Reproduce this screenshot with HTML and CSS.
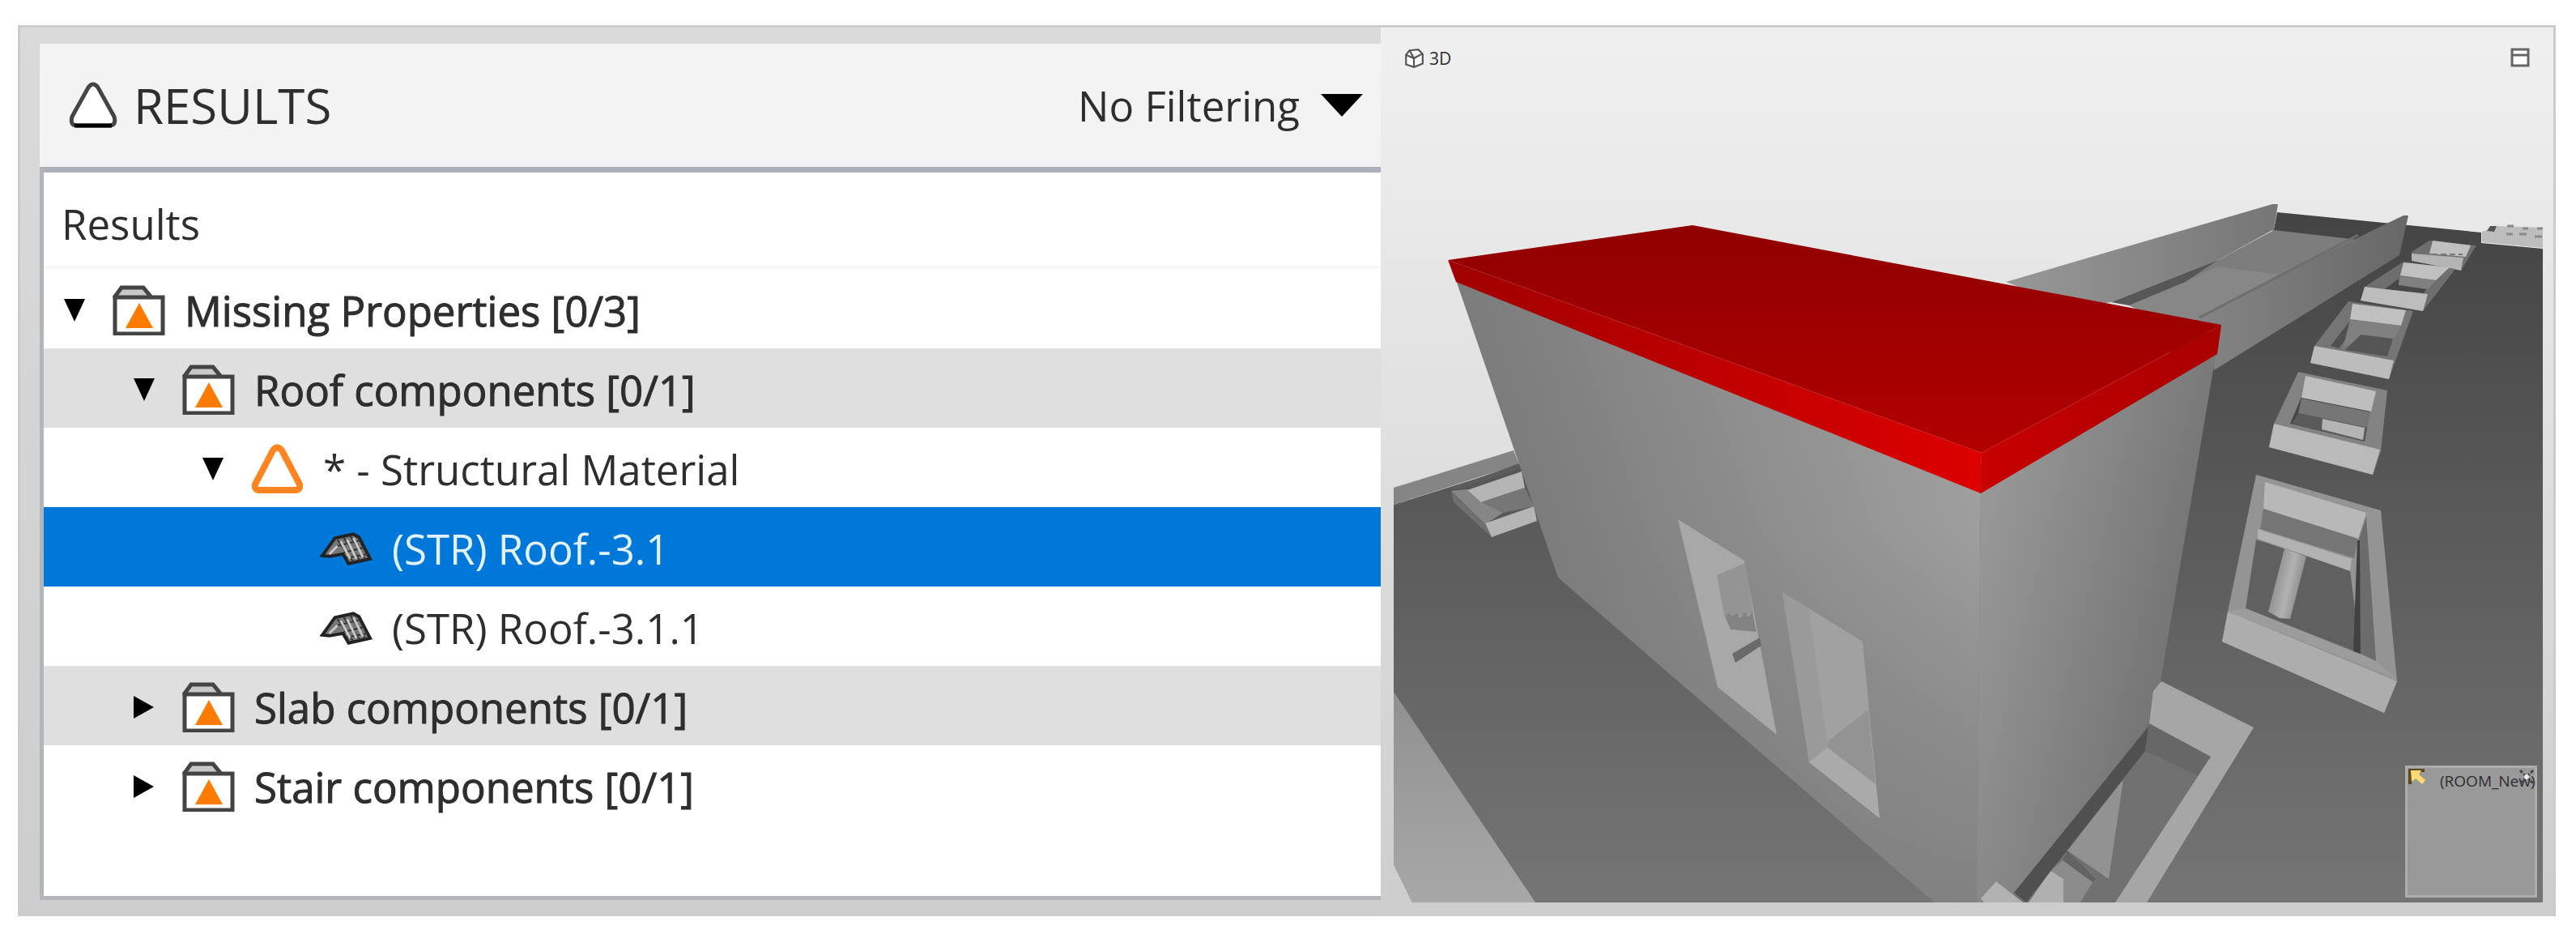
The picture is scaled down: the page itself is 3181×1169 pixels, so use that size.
FILE: index.html
```html
<!DOCTYPE html>
<html lang="en">
<head>
  <meta charset="UTF-8" />
  <title>Results</title>
  <link rel="stylesheet" href="styles.css">
</head>
<body>

  <!-- Shared icons -->
  <svg class="sprite" aria-hidden="true">
    <symbol id="caret-down" viewBox="0 0 28 28"><path d="M1 0H27L14 28Z"/></symbol>
    <symbol id="caret-right" viewBox="0 0 28 28"><path d="M1 0L26 14L1 28Z"/></symbol>
    <symbol id="folder" viewBox="0 0 65 62">
      <path d="M3 17V14L11 3H38L47 14V17" fill="#c8c8c8" stroke="#444" stroke-width="5"/>
      <rect x="3" y="15" width="59" height="45" fill="#fff" stroke="#444" stroke-width="5"/>
      <path d="M33 22L50 53H16Z" fill="#ff7b00"/>
    </symbol>
    <symbol id="warning" viewBox="0 0 65 62">
      <path d="M27 8Q32 1 38 8L60 50Q61 57 55 57H10Q4 57 5 50Z" fill="#fff" stroke="#ff8420" stroke-width="8"/>
    </symbol>
    <symbol id="roof" viewBox="0 0 66 42">
      <path d="M3 30L19 8L42 3L49 7L63 34L36 40L29 28L12 31Z" fill="#777" stroke="#222" stroke-width="4"/>
      <path d="M22 10L42 38M30 8L50 36M38 5L57 35M22 18L50 11M30 26L55 20M33 33L60 28" fill="none" stroke="#333" stroke-width="2"/>
      <path d="M26 12L38 34M34 10L46 34M42 8L54 32M12 28L22 18" fill="none" stroke="#c8c8c8" stroke-width="3"/>
    </symbol>
  </svg>

  <main class="workspace">

    <!-- Results tree -->
    <section class="results">
      <header class="results-header">
        <svg class="results-icon" viewBox="0 0 60 58">
          <path d="M24 7Q30 -1 36 7L56 43Q59 54 50 54H10Q1 54 4 43Z" fill="#fff" stroke="#444" stroke-width="5"/>
          <path d="M7 54H53" stroke="#000" stroke-width="5"/>
        </svg>
        <h1>RESULTS</h1>
        <button class="filter">No Filtering
          <svg viewBox="0 0 52 28"><path d="M0 0H52L26 28Z"/></svg>
        </button>
      </header>
      <div class="tree">
        <div class="tree-title">Results</div>
        <div class="row group">
          <svg class="caret"><use href="#caret-down"/></svg>
          <svg class="icon"><use href="#folder"/></svg>
          <span>Missing Properties [0/3]</span>
        </div>
        <div class="row group level-1 shaded">
          <svg class="caret"><use href="#caret-down"/></svg>
          <svg class="icon"><use href="#folder"/></svg>
          <span>Roof components [0/1]</span>
        </div>
        <div class="row level-2">
          <svg class="caret"><use href="#caret-down"/></svg>
          <svg class="icon"><use href="#warning"/></svg>
          <span>* - Structural Material</span>
        </div>
        <div class="row level-3 selected">
          <svg class="icon"><use href="#roof"/></svg>
          <span>(STR) Roof.-3.1</span>
        </div>
        <div class="row level-3">
          <svg class="icon"><use href="#roof"/></svg>
          <span>(STR) Roof.-3.1.1</span>
        </div>
        <div class="row group level-1 shaded">
          <svg class="caret"><use href="#caret-right"/></svg>
          <svg class="icon"><use href="#folder"/></svg>
          <span>Slab components [0/1]</span>
        </div>
        <div class="row group level-1">
          <svg class="caret"><use href="#caret-right"/></svg>
          <svg class="icon"><use href="#folder"/></svg>
          <span>Stair components [0/1]</span>
        </div>
      </div>
    </section>

    <!-- 3D view -->
    <section class="view">
      <svg class="scene" viewBox="1705 34 1448 1094">
        <defs>
          <linearGradient id="ground" x1="0" y1="0" x2="0" y2="1">
            <stop offset="0" stop-color="#444"/><stop offset="1" stop-color="#757575"/>
          </linearGradient>
          <linearGradient id="wallLeft" gradientUnits="userSpaceOnUse" x1="1850" y1="760" x2="2440" y2="560">
            <stop offset="0" stop-color="#767676"/><stop offset="1" stop-color="#a0a0a0"/>
          </linearGradient>
          <linearGradient id="wallShade" x1="0" y1="0" x2="0" y2="1">
            <stop offset="0.4" stop-color="#808080" stop-opacity="0"/><stop offset="1" stop-color="#808080" stop-opacity="0.9"/>
          </linearGradient>
          <linearGradient id="wallRight" gradientUnits="userSpaceOnUse" x1="2446" y1="700" x2="2690" y2="760">
            <stop offset="0" stop-color="#969696"/><stop offset="1" stop-color="#757575"/>
          </linearGradient>
          <linearGradient id="roofTop" x1="0" y1="0" x2="0" y2="1">
            <stop offset="0" stop-color="#900000"/><stop offset="1" stop-color="#b20000"/>
          </linearGradient>
          <linearGradient id="roofLeft" x1="0" x2="1">
            <stop offset="0" stop-color="#a00000"/><stop offset="1" stop-color="#dd0000"/>
          </linearGradient>
          <linearGradient id="roofRight" x1="0" x2="1">
            <stop offset="0" stop-color="#c80000"/><stop offset="1" stop-color="#a80000"/>
          </linearGradient>
          <linearGradient id="ramp" x1="0" x2="1">
            <stop offset="0" stop-color="#989898"/><stop offset="1" stop-color="#767676"/>
          </linearGradient>
          <linearGradient id="ramp2" x1="0" x2="1">
            <stop offset="0" stop-color="#858585"/><stop offset="1" stop-color="#676767"/>
          </linearGradient>
          <linearGradient id="terrace" x1="0" y1="0" x2="0" y2="1">
            <stop offset="0" stop-color="#909090"/><stop offset="1" stop-color="#a8a8a8"/>
          </linearGradient>
          <linearGradient id="column" gradientUnits="userSpaceOnUse" x1="2810" y1="720" x2="2841" y2="727">
            <stop offset="0" stop-color="#959595"/><stop offset="0.5" stop-color="#b2b2b2"/><stop offset="1" stop-color="#8c8c8c"/>
          </linearGradient>
        </defs>

        <!-- ground -->
        <polygon fill="url(#ground)" points="1721,623 1880,573 2600,573 2700,400 2808,283 2812,262 3064,287 3064,300 3140,307 3140,1114 1744,1114 1721,1067"/>
        <polygon fill="#858585" points="1721,602 1869,556 1876,573 1721,623"/>
        <polygon fill="#5c5c5c" points="1790,603 1876,572 1878,578 1800,604"/>
        <polygon fill="url(#terrace)" points="1721,854 1896,1114 1744,1114 1721,1067"/>

        <!-- skylight behind the building -->
        <polygon fill="#868686" points="1792,606 1812,604 1856,633 1834,647"/>
        <polygon fill="#6f6f6f" points="1792,606 1834,647 1842,663 1795,620"/>
        <polygon fill="#b5b5b5" points="1812,605 1879,582 1883,602 1829,620"/>
        <polygon fill="#767676" points="1829,620 1883,602 1894,625 1856,633"/>
        <polygon fill="#b5b5b5" points="1834,646 1894,625 1898,643 1842,663"/>

        <!-- ramp -->
        <polygon fill="#7d7d7d" points="2629,377 2699,348 2716,337 2741,320 2808,284 2912,296 2719,394 2680,400"/>
        <polygon fill="#878787" points="2629,377 2699,348 2737,329 2815,339 2719,394 2680,400"/>
        <polygon fill="url(#ramp)" points="2477,348 2806,252 2813,252 2808,283 2741,320 2607,373 2560,380"/>
        <polygon fill="#575757" points="2607,373 2741,320 2716,337 2699,348 2629,377"/>
        <polygon fill="url(#ramp2)" points="2711,392 2943,278 2968,266 2974,266 2963,315 2734,457 2730,420"/>
        <path d="M2716 392L2912 290" stroke="#6e6e6e" stroke-width="3"/>

        <!-- far block -->
        <polygon fill="#bdbdbd" points="3065,286 3074,283 3080,279 3140,281 3140,306 3065,299"/>
        <path d="M3071 285L3075 279H3083L3080 286Z" fill="#555"/>
        <path d="M3096 279h8M3115 282h7M3133 282h7M3095 289h8M3111 289h9M3130 292h9" stroke="#8a8a8a" stroke-width="3"/>

        <!-- skylights, far to near -->
        <polygon fill="#6e6e6e" points="3000,297 3058,303 3039,334 2978,318 2978,311"/>
        <polygon fill="#c0c0c0" points="3004,297 3051,303 3045,317 3000,313"/>
        <polygon fill="#b4b4b4" points="2978,313 3042,318 3039,334 2978,322"/>
        <path d="M3003 314H3041" stroke="#777" stroke-width="2" stroke-dasharray="7 4"/>

        <polygon fill="#6e6e6e" points="2968,323 3032,332 2992,384 2915,371 2920,354"/>
        <polygon fill="#c0c0c0" points="2968,324 3025,330 3008,346 2964,340"/>
        <polygon fill="#808080" points="2964,341 3008,346 2998,357 2962,352"/>
        <polygon fill="#474747" points="2962,344 2962,352 2996,357 2993,362 2945,357"/>
        <polygon fill="#bdbdbd" points="2920,354 2998,363 2992,384 2915,371"/>

        <polygon fill="#757575" points="2900,372 2980,384 2950,468 2853,448 2858,427"/>
        <polygon fill="#c0c0c0" points="2905,375 2971,383 2965,402 2902,394"/>
        <polygon fill="#505050" points="2902,396 2878,427 2888,430 2904,410"/>
        <polygon fill="#808080" points="2902,395 2965,402 2955,420 2918,416 2893,430"/>
        <polygon fill="#555" points="2915,413 2955,418 2948,440 2896,432"/>
        <polygon fill="#bcbcbc" points="2858,427 2956,445 2950,468 2853,448"/>

        <polygon fill="#838383" points="2838,459 2948,482 2940,557 2930,586 2802,552 2808,523"/>
        <polygon fill="#474747" points="2842,490 2828,523 2920,545 2930,490"/>
        <polygon fill="#bebebe" points="2847,464 2934,483 2928,508 2842,491"/>
        <polygon fill="#767676" points="2842,492 2928,509 2923,528 2838,510"/>
        <polygon fill="#5a5a5a" points="2838,510 2923,528 2920,545 2830,523"/>
        <polygon fill="#b4b4b4" points="2868,517 2920,528 2918,543 2867,530"/>
        <polygon fill="#bababa" points="2808,523 2939,555 2930,586 2802,552"/>

        <polygon fill="#949494" points="2786,586 2940,630 2960,841 2944,880 2744,792 2751,755"/>
        <polygon fill="#606060" points="2786,666 2902,704 2915,807 2773,751"/>
        <polygon fill="#b8b8b8" points="2797,595 2922,633 2912,665 2795,628"/>
        <polygon fill="#757575" points="2795,628 2912,665 2907,689 2791,653"/>
        <polygon fill="url(#column)" points="2821,677 2848,687 2828,764 2815,763 2801,755"/>
        <polygon fill="#b2b2b2" points="2788,653 2904,690 2902,705 2788,665"/>
        <polygon fill="#6c6c6c" points="2922,638 2913,665 2915,807 2934,816"/>
        <polygon fill="#414141" points="2911,667 2906,804 2915,807 2914,667"/>
        <polygon fill="#adadad" points="2751,755 2960,841 2944,880 2744,792"/>
        <polygon fill="#9c9c9c" points="2751,755 2773,751 2934,816 2960,838"/>

        <!-- building -->
        <polygon fill="url(#wallRight)" points="2446,600 2738,430 2733,457 2668,841 2654,893 2651,898 2480,1114 2441,1114"/>
        <polygon fill="url(#wallLeft)" points="1798,346 2446,606 2441,1114 2389,1114 1924,713"/>
        <polygon fill="url(#wallShade)" points="1798,346 2446,606 2441,1114 2389,1114 1924,713"/>

        <!-- left window -->
        <polygon fill="#a8a8a8" points="2072,641 2154,692 2194,907 2121,848"/>
        <polygon fill="#949494" points="2120,710 2155,695 2165,757 2130,763"/>
        <polygon fill="#838383" points="2131,763 2134,756 2138,761 2145,757 2149,763 2155,755 2159,761 2164,755 2169,780 2137,777"/>
        <polygon fill="#6a6a6a" points="2139,807 2173,787 2175,797 2143,818"/>
        <!-- right window -->
        <polygon fill="#a1a1a1" points="2201,731 2300,792 2321,1010 2234,941"/>
        <polygon fill="#9a9a9a" points="2201,731 2234,753 2257,922 2234,941"/>
        <polygon fill="#939393" points="2257,915 2307,876 2316,970 2257,923"/>
        <polygon fill="#aaa" points="2257,923 2316,968 2321,1010 2234,941"/>

        <!-- highlighted roof -->
        <polygon fill="url(#roofTop)" points="1788,321 2090,278 2743,401 2447,559"/>
        <polygon fill="url(#roofLeft)" points="1788,321 2447,559 2446,609 1798,348"/>
        <polygon fill="url(#roofRight)" points="2447,559 2743,401 2738,437 2446,609"/>

        <!-- light well -->
        <polygon fill="#717171" points="2654,893 2730,934 2612,1114 2502,1114"/>
        <polygon fill="#676767" points="2654,893 2730,934 2714,957 2649,927"/>
        <polygon fill="#929292" points="2622,962 2604,1085 2553,1050"/>
        <polygon fill="#636363" points="2553,1050 2588,1085 2584,1089 2547,1062"/>
        <polygon fill="#8c8c8c" points="2547,1062 2584,1089 2569,1114 2548,1114 2532,1075"/>
        <polygon fill="#b0b0b0" points="2532,1075 2548,1085 2548,1114 2505,1114"/>
        <polygon fill="#505050" points="2653,897 2649,927 2502,1114 2487,1102"/>
        <polygon fill="#a6a6a6" points="2669,841 2783,898 2651,1114 2612,1114 2730,934 2654,893 2659,853"/>
        <polygon fill="#b2b2b2" points="2465,1088 2498,1114 2450,1114 2446,1109"/>
      </svg>

      <div class="view-label">
        <svg viewBox="0 0 24 24"><path d="M7 3L17 2L22 7V18L12 22L3 19V8ZM3 8L12 12L21 7M7 3L12 12V22" fill="#fff" stroke="#555" stroke-width="2"/></svg>
        3D
      </div>
      <button class="maximize" aria-label="Maximize">
        <svg viewBox="0 0 24 24"><path d="M2 2H22V22H2ZM2 9H22" fill="#fff" stroke="#666" stroke-width="3"/></svg>
      </button>

      <div class="room-box">
        <svg class="pointer" viewBox="0 0 22 20">
          <path d="M0 0H20V4H6L4 19H0Z" fill="#5a4a20"/>
          <path d="M3 2H16L13 7L21 14L17 19L9 12L4 16Z" fill="#ffd876"/>
        </svg>
        <span>(ROOM_New)</span>
        <svg class="close" viewBox="0 0 20 20"><path d="M2 2L18 18M18 2L2 18" stroke="#444" stroke-width="3" stroke-dasharray="4 2"/><circle cx="10" cy="10" r="3" fill="#eee"/></svg>
      </div>
    </section>

  </main>
</body>
</html>
```
FILE: styles.css
```css
* { box-sizing: border-box; }
body {
  margin: 0;
  padding: 31px 25px 38px 22px;
  font-family: "Open Sans", "Noto Sans", sans-serif;
  font-size: 51px;
  background: white;
  color: #2e2e2e;
}
button {
  padding: 0;
  border: none;
  background: none;
  color: inherit;
  font: inherit;
  cursor: pointer;
}
svg { display: block; flex: none; }
.sprite { position: absolute; width: 0; height: 0; }

.workspace {
  display: grid;
  grid-template-columns: 210fr 181fr;
  border: 3px solid #cecbcb;
  background: linear-gradient(#dadada, #cdcdcd);
}

/* Results tree */
.results {
  display: flex;
  flex-direction: column;
  padding: 20px 0 17px 24px;
}
.results-header {
  display: flex;
  align-items: center;
  height: 152px;
  padding: 0 22px 0 36px;
  background: #f3f3f3;
}
.results-icon { width: 60px; height: 58px; margin-right: 20px; }
.results-header h1 {
  margin: 0;
  font-size: 60px;
  font-weight: 400;
}
.filter {
  display: flex;
  align-items: center;
  gap: 26px;
  margin-left: auto;
}
.filter svg { width: 52px; height: 28px; }
.tree {
  flex: 1;
  border: 5px solid #b3b5bd;
  border-top: 7px solid #adb0b8;
  border-right: none;
  background: white;
}
.tree-title {
  height: 119px;
  padding-left: 22px;
  border-bottom: 4px solid #f7f7f7;
  line-height: 126px;
}
.row {
  display: flex;
  align-items: center;
  height: 98px;
  padding: 4px 0 0 24px;
}
.level-1 { padding-left: 110px; }
.level-2 { padding-left: 195px; }
.level-3 { padding-left: 341px; }
.group { -webkit-text-stroke: 1px; }
.shaded { background: #dfdfdf; }
.selected { background: #0078d9; color: #e3f1ff; }
.caret { width: 28px; height: 28px; margin-right: 33px; fill: black; }
.icon { width: 65px; height: 62px; margin-right: 24px; }

/* 3D view */
.view {
  position: relative;
  background: linear-gradient(#f0f0f0, #cdcdcd);
}
.scene { width: 100%; height: auto; }
.view-label {
  position: absolute;
  top: 24px;
  left: 28px;
  display: flex;
  align-items: center;
  gap: 6px;
  font-size: 21px;
  line-height: 28px;
}
.view-label svg { width: 26px; height: 26px; }
.maximize {
  position: absolute;
  top: 25px;
  right: 29px;
}
.maximize svg { width: 24px; height: 24px; }
.room-box {
  position: absolute;
  right: 20px;
  bottom: 20px;
  width: 163px;
  height: 163px;
  border: 3px solid #adadad;
  background: #999;
}
.room-box span {
  display: block;
  padding: 4px 0 0 40px;
  font-size: 19px;
  line-height: 24px;
}
.pointer {
  position: absolute;
  top: 1px;
  left: 1px;
  width: 22px;
  height: 20px;
}
.close {
  position: absolute;
  top: 1px;
  right: 0;
  width: 20px;
  height: 20px;
}
```
